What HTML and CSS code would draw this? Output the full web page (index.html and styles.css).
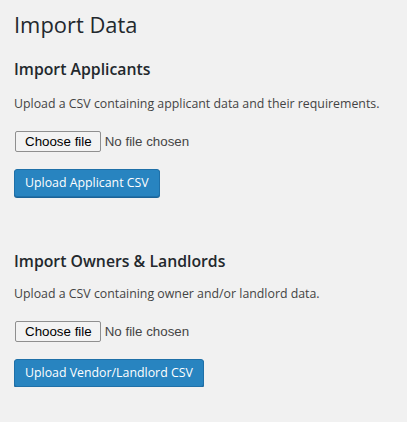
FILE: index.html
```html
<!DOCTYPE html>
<html>
<head>
<meta charset="utf-8">
<link rel="stylesheet" href="styles.css">
</head>
<body>
<div class="wrap">
  <h1 class="page-title">Import Data</h1>
  <section class="import-section">
    <h2 class="section-title">Import Applicants</h2>
    <p class="desc">Upload a CSV containing applicant data and their requirements.</p>
    <div class="file-row">
      <span class="file-btn">Choose file</span>
      <span class="file-status">No file chosen</span>
    </div>
    <button class="btn-primary">Upload Applicant CSV</button>
  </section>
  <section class="import-section second">
    <h2 class="section-title">Import Owners &amp; Landlords</h2>
    <p class="desc desc-tight">Upload a CSV containing owner and/or landlord data.</p>
    <div class="file-row">
      <span class="file-btn">Choose file</span>
      <span class="file-status">No file chosen</span>
    </div>
    <button class="btn-primary">Upload Vendor/Landlord CSV</button>
  </section>
</div>
</body>
</html>
```
FILE: styles.css
```css
html, body {
  margin: 0;
  padding: 0;
  background: #f1f1f1;
}
body {
  font-family: "Open Sans", "Noto Sans", sans-serif;
  color: #444;
  font-size: 12.35px;
}
.wrap {
  padding: 9.5px 14px 0;
}
.page-title {
  font-size: 21.9px;
  font-weight: 400;
  color: #23282d;
  margin: 0;
  line-height: 30px;
}
.section-title {
  font-size: 15.8px;
  font-weight: 600;
  color: #23282d;
  margin: 18.3px 0 0;
  line-height: 22px;
}
.desc {
  margin: 15.3px 0 0;
  line-height: 18px;
}
.desc-tight {
  margin-top: 13.4px;
}
.file-row {
  display: flex;
  align-items: center;
  gap: 4px;
  margin-top: 17.8px;
  height: 21px;
}
.file-btn {
  box-sizing: border-box;
  height: 21px;
  padding: 0 8px 0 9px;
  margin-left: 1px;
  display: flex;
  align-items: center;
  background: #f3f3f3;
  border: 1px solid #8f8f8f;
  border-radius: 2px;
  font-family: "Liberation Sans", Arial, sans-serif;
  font-size: 13.33px;
  color: #000;
}
.file-status {
  font-family: "Liberation Sans", Arial, sans-serif;
  font-size: 13.33px;
  color: #444;
}
.btn-primary {
  display: block;
  box-sizing: border-box;
  margin-top: 17px;
  height: 28px;
  padding: 0 10px 1px;
  background: #2884c0;
  border: 1px solid #1f70a8;
  box-shadow: 0 1px 0 #1b6397;
  border-radius: 3px;
  color: #fff;
  font-family: "Open Sans", "Noto Sans", sans-serif;
  font-size: 12.35px;
  line-height: 25px;
}
.second {
  margin-top: 52.8px;
}
```
